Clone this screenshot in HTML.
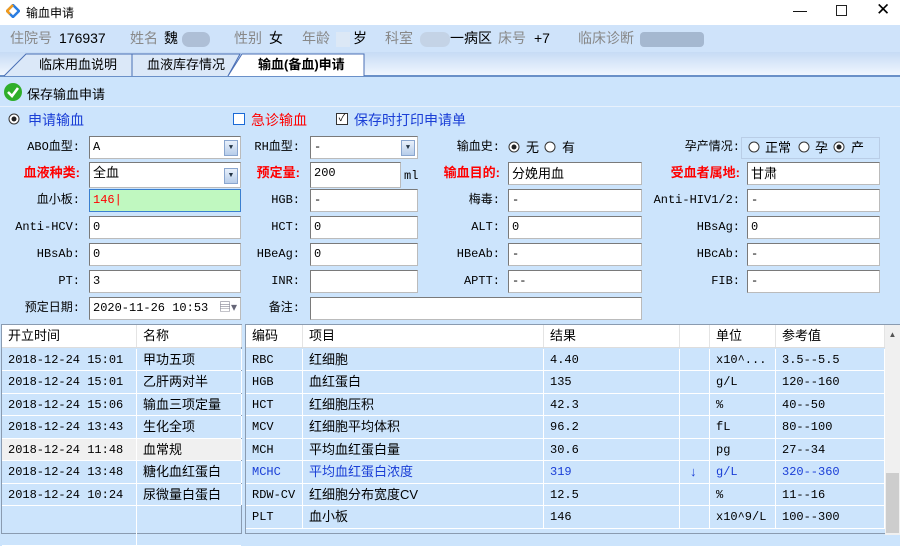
<!DOCTYPE html>
<html><head><meta charset="utf-8"><style>
*{margin:0;padding:0;box-sizing:border-box}
body{width:900px;height:527px;overflow:hidden;background:#cce4fc;font-family:"Liberation Sans","Noto Sans CJK SC",sans-serif;font-size:13px;color:#000;position:relative}
.a{position:absolute;white-space:nowrap}
.mono{font-family:"Liberation Mono","Noto Sans CJK SC",monospace;font-size:12px}
.lbl{position:absolute;text-align:right;font-family:"Liberation Mono","Noto Sans CJK SC",monospace;font-size:12px;line-height:22px}
.red{color:#f00;font-weight:bold;font-family:"Liberation Sans","Noto Sans CJK SC",sans-serif;font-size:13px}
.in{position:absolute;height:23px;background:#fff;border:1px solid #7a7a7a;border-right-color:#bbb;border-bottom-color:#bbb;font-family:"Liberation Mono","Noto Sans CJK SC",monospace;font-size:12px;line-height:21px;padding-left:3px}
.dd{position:absolute;right:2px;top:3px;width:14px;height:16px;background:linear-gradient(#e8f0fb,#b7cdea);border:1px solid #8aa6cf;font-size:7px;line-height:14px;text-align:center;color:#234}
.grid{position:absolute;background:#cce4fc;border:1px solid #8a9bb0}
.row{position:absolute;left:0;right:0;height:22.5px;border-bottom:1px solid #fff;line-height:22px}
.c{position:absolute;top:0;bottom:0;border-right:1px solid #fff;padding-left:6px;overflow:hidden}
.hd{background:#fff;border-bottom:1px solid #ddd}
.hd .c{border-right:1px solid #e4e4e4;font-size:13px}
</style></head><body>
<div class="a" style="left:0;top:0;width:900px;height:25px;background:#fff"></div>
<svg class="a" style="left:6px;top:4px" width="14" height="14" viewBox="0 0 14 14"><path d="M7 1 L13 7 L7 13 L1 7Z" fill="none" stroke="#2a7de1" stroke-width="2.5"/><path d="M7 1 L1 7 L4 10" fill="none" stroke="#f29b1d" stroke-width="2.5"/></svg>
<div class="a" style="left:26px;top:4px;font-size:12px">输血申请</div>
<div class="a" style="left:793px;top:2px;font-size:14px">—</div>
<div class="a" style="left:836px;top:5px;width:11px;height:11px;border:1px solid #222"></div>
<div class="a" style="left:876px;top:0px;font-size:17px;font-weight:300">✕</div>
<div class="a" style="left:0;top:25px;width:900px;height:27px;background:#cfe3fa;line-height:27px;font-size:14px;color:#888">
<span class="a" style="left:10px">住院号</span><span class="a" style="left:59px;color:#000">176937</span>
<span class="a" style="left:130px">姓名</span><span class="a" style="left:164px;color:#000">魏</span><span class="a" style="left:182px;top:7px;width:28px;height:15px;background:#aebfd6;border-radius:7px"></span>
<span class="a" style="left:234px">性别</span><span class="a" style="left:269px;color:#000">女</span>
<span class="a" style="left:302px">年龄</span><span class="a" style="left:336px;top:7px;width:14px;height:15px;background:#dce8f6"></span><span class="a" style="left:353px;color:#000">岁</span>
<span class="a" style="left:385px">科室</span><span class="a" style="left:420px;top:7px;width:30px;height:15px;background:#c4d3e6;border-radius:7px"></span><span class="a" style="left:450px;color:#000">一病区</span>
<span class="a" style="left:498px">床号</span><span class="a" style="left:534px;color:#000">+7</span>
<span class="a" style="left:578px">临床诊断</span><span class="a" style="left:640px;top:7px;width:64px;height:15px;background:#a5b8d0;border-radius:4px"></span>
</div>
<div class="a" style="left:0;top:52px;width:900px;height:23px;background:linear-gradient(#c6dbf5,#f0f6fe)"></div>
<div class="a" style="left:0;top:75px;width:900px;height:2px;background:#6a90c8"></div>
<svg class="a" style="left:0;top:52px" width="370" height="25"><path d="M4 24 L26 2 L132 2 L132 24" fill="#dbe8f8" stroke="#4a6fb5"/><path d="M132 24 L132 2 L240 2 L228 24" fill="#dbe8f8" stroke="#4a6fb5"/><path d="M228 24 L242 2 L364 2 L364 24" fill="#fff" stroke="#4a6fb5"/></svg>
<div class="a" style="left:39px;top:54px;font-size:13px">临床用血说明</div>
<div class="a" style="left:147px;top:54px;font-size:13px">血液库存情况</div>
<div class="a" style="left:258px;top:54px;font-size:13px;font-weight:bold">输血(备血)申请</div>
<svg class="a" style="left:3px;top:82px" width="20" height="20"><circle cx="10" cy="10" r="9" fill="#2fae2a"/><path d="M5 10 L9 14 L15 6" stroke="#fff" stroke-width="2.6" fill="none"/></svg>
<div class="a" style="left:27px;top:84px;font-size:13px">保存输血申请</div>
<div class="a" style="left:0;top:106px;width:900px;height:1px;background:#e8f1fc"></div>
<svg class="a" style="left:8px;top:113px" width="12" height="12"><circle cx="6" cy="6" r="5" fill="#fff" stroke="#333"/><circle cx="6" cy="6" r="2.5" fill="#222"/></svg>
<div class="a" style="left:28px;top:110px;font-size:14px;color:#1a3ed6">申请输血</div>
<div class="a" style="left:233px;top:113px;width:12px;height:12px;border:1px solid #1a6ad6;background:#fff"></div>
<div class="a" style="left:251px;top:110px;font-size:14px;color:#f00">急诊输血</div>
<div class="a" style="left:336px;top:113px;width:12px;height:12px;border:1px solid #333;background:#fff;font-size:10px;line-height:10px;text-align:center">✓</div>
<div class="a" style="left:354px;top:110px;font-size:14px;color:#1a3ed6">保存时打印申请单</div>

<div class="lbl" style="left:0;width:80px;top:136px">ABO血型:</div>
<div class="in" style="left:89px;top:136px;width:152px">A<div class="dd">▼</div></div>
<div class="lbl" style="left:220px;width:80px;top:136px">RH血型:</div>
<div class="in" style="left:310px;top:136px;width:108px">-<div class="dd">▼</div></div>
<div class="lbl" style="left:420px;width:80px;top:136px">输血史:</div>
<svg class="a" style="left:508px;top:141px" width="12" height="12"><circle cx="6" cy="6" r="5" fill="#fff" stroke="#333"/><circle cx="6" cy="6" r="2.5" fill="#222"/></svg>
<div class="a" style="left:526px;top:137px">无</div>
<svg class="a" style="left:544px;top:141px" width="12" height="12"><circle cx="6" cy="6" r="5" fill="#fff" stroke="#333"/></svg>
<div class="a" style="left:562px;top:137px">有</div>
<div class="lbl" style="left:660px;width:80px;top:136px">孕产情况:</div>
<div class="a" style="left:741px;top:137px;width:139px;height:22px;border:1px solid #b9cde6"></div>
<svg class="a" style="left:748px;top:141px" width="12" height="12"><circle cx="6" cy="6" r="5" fill="#fff" stroke="#333"/></svg>
<div class="a" style="left:765px;top:137px">正常</div>
<svg class="a" style="left:798px;top:141px" width="12" height="12"><circle cx="6" cy="6" r="5" fill="#fff" stroke="#333"/></svg>
<div class="a" style="left:815px;top:137px">孕</div>
<svg class="a" style="left:833px;top:141px" width="12" height="12"><circle cx="6" cy="6" r="5" fill="#fff" stroke="#333"/><circle cx="6" cy="6" r="2.5" fill="#222"/></svg>
<div class="a" style="left:851px;top:137px">产</div>

<div class="lbl red" style="left:0;width:80px;top:162px">血液种类:</div>
<div class="in" style="left:89px;top:162px;width:152px;height:26px;font-size:13px;line-height:20px;font-family:'Liberation Sans','Noto Sans CJK SC',sans-serif">全血<div class="dd" style="top:5px">▼</div></div>
<div class="lbl red" style="left:220px;width:80px;top:162px">预定量:</div>
<div class="in" style="left:310px;top:162px;width:91px;height:26px;line-height:20px">200</div>
<div class="a mono" style="left:404px;top:169px">ml</div>
<div class="lbl red" style="left:420px;width:80px;top:162px">输血目的:</div>
<div class="in" style="left:508px;top:162px;width:134px;font-size:13px;font-family:'Liberation Sans','Noto Sans CJK SC',sans-serif">分娩用血</div>
<div class="lbl red" style="left:640px;width:100px;top:162px">受血者属地:</div>
<div class="in" style="left:747px;top:162px;width:133px;font-size:13px;font-family:'Liberation Sans','Noto Sans CJK SC',sans-serif">甘肃</div>

<div class="lbl" style="left:0;width:80px;top:189px">血小板:</div>
<div class="in" style="left:89px;top:189px;width:152px;background:#c0f8c0;border-color:#3a7fd0;color:#f00">146|</div>
<div class="lbl" style="left:220px;width:80px;top:189px">HGB:</div>
<div class="in" style="left:310px;top:189px;width:108px">-</div>
<div class="lbl" style="left:420px;width:80px;top:189px">梅毒:</div>
<div class="in" style="left:508px;top:189px;width:134px">-</div>
<div class="lbl" style="left:620px;width:120px;top:189px">Anti-HIV1/2:</div>
<div class="in" style="left:747px;top:189px;width:133px">-</div>

<div class="lbl" style="left:0;width:80px;top:216px">Anti-HCV:</div>
<div class="in" style="left:89px;top:216px;width:152px">0</div>
<div class="lbl" style="left:220px;width:80px;top:216px">HCT:</div>
<div class="in" style="left:310px;top:216px;width:108px">0</div>
<div class="lbl" style="left:420px;width:80px;top:216px">ALT:</div>
<div class="in" style="left:508px;top:216px;width:134px">0</div>
<div class="lbl" style="left:620px;width:120px;top:216px">HBsAg:</div>
<div class="in" style="left:747px;top:216px;width:133px">0</div>

<div class="lbl" style="left:0;width:80px;top:243px">HBsAb:</div>
<div class="in" style="left:89px;top:243px;width:152px">0</div>
<div class="lbl" style="left:220px;width:80px;top:243px">HBeAg:</div>
<div class="in" style="left:310px;top:243px;width:108px">0</div>
<div class="lbl" style="left:420px;width:80px;top:243px">HBeAb:</div>
<div class="in" style="left:508px;top:243px;width:134px">-</div>
<div class="lbl" style="left:620px;width:120px;top:243px">HBcAb:</div>
<div class="in" style="left:747px;top:243px;width:133px">-</div>

<div class="lbl" style="left:0;width:80px;top:270px">PT:</div>
<div class="in" style="left:89px;top:270px;width:152px">3</div>
<div class="lbl" style="left:220px;width:80px;top:270px">INR:</div>
<div class="in" style="left:310px;top:270px;width:108px"></div>
<div class="lbl" style="left:420px;width:80px;top:270px">APTT:</div>
<div class="in" style="left:508px;top:270px;width:134px">--</div>
<div class="lbl" style="left:620px;width:120px;top:270px">FIB:</div>
<div class="in" style="left:747px;top:270px;width:133px">-</div>

<div class="lbl" style="left:0;width:80px;top:297px">预定日期:</div>
<div class="in" style="left:89px;top:297px;width:152px">2020-11-26 10:53<span style="position:absolute;right:3px;color:#667">▤▾</span></div>
<div class="lbl" style="left:220px;width:80px;top:297px">备注:</div>
<div class="in" style="left:310px;top:297px;width:332px"></div>

<div class="grid" style="left:1px;top:324px;width:241px;height:210px">
<div class="row hd" style="top:0;height:23px"><div class="c" style="left:0;width:135px">开立时间</div><div class="c" style="left:135px;width:105px">名称</div></div>
<div class="row" style="top:23.5px"><div class="c mono" style="left:0;width:135px">2018-12-24 15:01</div><div class="c" style="left:135px;width:105px">甲功五项</div></div>
<div class="row" style="top:46px"><div class="c mono" style="left:0;width:135px">2018-12-24 15:01</div><div class="c" style="left:135px;width:105px">乙肝两对半</div></div>
<div class="row" style="top:68.5px"><div class="c mono" style="left:0;width:135px">2018-12-24 15:06</div><div class="c" style="left:135px;width:105px">输血三项定量</div></div>
<div class="row" style="top:91px"><div class="c mono" style="left:0;width:135px">2018-12-24 13:43</div><div class="c" style="left:135px;width:105px">生化全项</div></div>
<div class="row" style="top:113.5px;background:#f0f0f0"><div class="c mono" style="left:0;width:135px">2018-12-24 11:48</div><div class="c" style="left:135px;width:105px">血常规</div></div>
<div class="row" style="top:136px"><div class="c mono" style="left:0;width:135px">2018-12-24 13:48</div><div class="c" style="left:135px;width:105px">糖化血红蛋白</div></div>
<div class="row" style="top:158.5px"><div class="c mono" style="left:0;width:135px">2018-12-24 10:24</div><div class="c" style="left:135px;width:105px">尿微量白蛋白</div></div>
<div class="row" style="top:181px;height:40px"><div class="c" style="left:0;width:135px"></div></div>
</div>
<div class="grid" style="left:245px;top:324px;width:656px;height:210px">
<div class="row hd" style="top:0;right:15px;height:23px"><div class="c" style="left:0;width:57px">编码</div><div class="c" style="left:57px;width:241px">项目</div><div class="c" style="left:298px;width:136px">结果</div><div class="c" style="left:434px;width:30px"></div><div class="c" style="left:464px;width:66px">单位</div><div class="c" style="left:530px;width:109px">参考值</div></div>
<div class="row" style="top:23.5px;right:15px"><div class="c mono" style="left:0;width:57px">RBC</div><div class="c" style="left:57px;width:241px">红细胞</div><div class="c mono" style="left:298px;width:136px">4.40</div><div class="c" style="left:434px;width:30px"></div><div class="c mono" style="left:464px;width:66px">x10^...</div><div class="c mono" style="left:530px;width:109px">3.5--5.5</div></div>
<div class="row" style="top:46px;right:15px"><div class="c mono" style="left:0;width:57px">HGB</div><div class="c" style="left:57px;width:241px">血红蛋白</div><div class="c mono" style="left:298px;width:136px">135</div><div class="c" style="left:434px;width:30px"></div><div class="c mono" style="left:464px;width:66px">g/L</div><div class="c mono" style="left:530px;width:109px">120--160</div></div>
<div class="row" style="top:68.5px;right:15px"><div class="c mono" style="left:0;width:57px">HCT</div><div class="c" style="left:57px;width:241px">红细胞压积</div><div class="c mono" style="left:298px;width:136px">42.3</div><div class="c" style="left:434px;width:30px"></div><div class="c mono" style="left:464px;width:66px">%</div><div class="c mono" style="left:530px;width:109px">40--50</div></div>
<div class="row" style="top:91px;right:15px"><div class="c mono" style="left:0;width:57px">MCV</div><div class="c" style="left:57px;width:241px">红细胞平均体积</div><div class="c mono" style="left:298px;width:136px">96.2</div><div class="c" style="left:434px;width:30px"></div><div class="c mono" style="left:464px;width:66px">fL</div><div class="c mono" style="left:530px;width:109px">80--100</div></div>
<div class="row" style="top:113.5px;right:15px"><div class="c mono" style="left:0;width:57px">MCH</div><div class="c" style="left:57px;width:241px">平均血红蛋白量</div><div class="c mono" style="left:298px;width:136px">30.6</div><div class="c" style="left:434px;width:30px"></div><div class="c mono" style="left:464px;width:66px">pg</div><div class="c mono" style="left:530px;width:109px">27--34</div></div>
<div class="row" style="top:136px;right:15px;color:#1a3ed6"><div class="c mono" style="left:0;width:57px">MCHC</div><div class="c" style="left:57px;width:241px">平均血红蛋白浓度</div><div class="c mono" style="left:298px;width:136px">319</div><div class="c" style="left:434px;width:30px;padding-left:10px">↓</div><div class="c mono" style="left:464px;width:66px">g/L</div><div class="c mono" style="left:530px;width:109px">320--360</div></div>
<div class="row" style="top:158.5px;right:15px"><div class="c mono" style="left:0;width:57px">RDW-CV</div><div class="c" style="left:57px;width:241px">红细胞分布宽度CV</div><div class="c mono" style="left:298px;width:136px">12.5</div><div class="c" style="left:434px;width:30px"></div><div class="c mono" style="left:464px;width:66px">%</div><div class="c mono" style="left:530px;width:109px">11--16</div></div>
<div class="row" style="top:181px;right:15px"><div class="c mono" style="left:0;width:57px">PLT</div><div class="c" style="left:57px;width:241px">血小板</div><div class="c mono" style="left:298px;width:136px">146</div><div class="c" style="left:434px;width:30px"></div><div class="c mono" style="left:464px;width:66px">x10^9/L</div><div class="c mono" style="left:530px;width:109px">100--300</div></div>
<div class="a" style="right:0;top:0;width:15px;height:210px;background:#f0f0f0"><div style="text-align:center;font-size:8px;color:#555;margin-top:5px">▲</div><div style="position:absolute;left:1px;right:1px;top:148px;height:60px;background:#cdcdcd"></div></div>
</div>
</body></html>
